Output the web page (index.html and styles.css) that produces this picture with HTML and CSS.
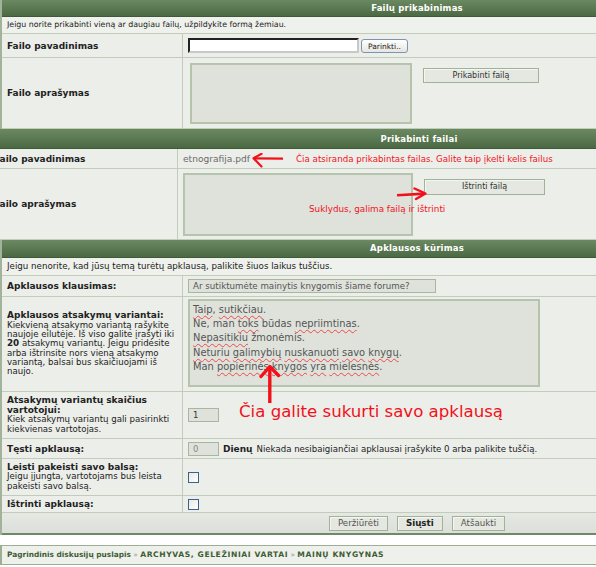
FILE: index.html
```html
<!DOCTYPE html>
<html lang="lt">
  <head>
    <meta charset="UTF-8" />
    <meta name="viewport" content="width=device-width, initial-scale=1.0" />
    <title>Failų prikabinimas</title>
    <link rel="stylesheet" href="styles.css">
  </head>
  <body>
    <div class="page">

      <!-- failų prikabinimas -->
      <div class="panel panel-attach">
        <div class="panel-head">Failų prikabinimas</div>
        <div class="panel-note">Jeigu norite prikabinti vieną ar daugiau failų, užpildykite formą žemiau.</div>
        <div class="row row-name">
          <div class="cell-label">Failo pavadinimas</div>
          <div class="cell-field">
            <span class="file-box"></span>
            <span class="btn-browse">Parinkti..</span>
          </div>
        </div>
        <div class="row row-desc">
          <div class="cell-label">Failo aprašymas</div>
          <div class="cell-field field-top">
            <div class="text-box box-attach"></div>
            <span class="btn btn-attach">Prikabinti failą</span>
          </div>
        </div>
      </div>

      <!-- jau prikabinti failai -->
      <div class="panel panel-files">
        <div class="panel-head">Prikabinti failai</div>
        <div class="row row-file">
          <div class="cell-label">Failo pavadinimas</div>
          <div class="cell-field">
            <span class="file-name">etnografija.pdf</span>
            <svg class="arrow-left" width="32" height="15" viewBox="0 0 32 15">
              <path d="M31 5.6 L2 5.4" stroke="#f2111b" stroke-width="2.2" fill="none"/>
              <path d="M9.5 0.8 L1.5 5.2 L9.5 13.5" stroke="#f2111b" stroke-width="2.2" fill="none" stroke-linecap="round" stroke-linejoin="round"/>
            </svg>
            <span class="hint">Čia atsiranda prikabintas failas. Galite taip įkelti kelis failus</span>
          </div>
        </div>
        <div class="row row-desc2">
          <div class="cell-label">Failo aprašymas</div>
          <div class="cell-field field-top">
            <div class="text-box box-files"></div>
            <span class="btn btn-delete">Ištrinti failą</span>
          </div>
          <svg class="arrow-right" width="32" height="14" viewBox="0 0 32 14">
            <path d="M1 8.2 L29 6.6" stroke="#f2111b" stroke-width="2.6" fill="none"/>
            <path d="M18.5 1.5 L29.5 6.5 L20 12" stroke="#f2111b" stroke-width="2.4" fill="none" stroke-linecap="round" stroke-linejoin="round"/>
          </svg>
          <span class="hint hint-delete">Suklydus, galima failą ir ištrinti</span>
        </div>
      </div>

      <!-- apklausos kūrimas -->
      <div class="panel panel-poll">
        <div class="panel-head">Apklausos kūrimas</div>
        <div class="panel-note">Jeigu nenorite, kad jūsų temą turėtų apklausą, palikite šiuos laikus tuščius.</div>
        <div class="row row-question">
          <div class="cell-label">Apklausos klausimas:</div>
          <div class="cell-field">
            <span class="field-box field-question">Ar sutiktumėte mainytis knygomis šiame forume?</span>
          </div>
        </div>
        <div class="row row-options">
          <div class="cell-label">
            <span class="label-title">Apklausos atsakymų variantai:</span>
            <span class="label-desc">Kiekvieną atsakymo variantą rašykite<br>naujoje eilutėje. Iš viso galite įrašyti iki<br><b>20</b> atsakymų variantų. Jeigu pridėsite<br>arba ištrinsite nors vieną atsakymo<br>variantą, balsai bus skaičiuojami iš<br>naujo.</span>
          </div>
          <div class="cell-field field-top">
            <div class="text-box box-options">
              <div><u>Taip</u>, <u>sutikčiau</u>.</div>
              <div>Ne, man <u>toks</u> būdas <u>nepriimtinas</u>.</div>
              <div><u>Nepasitikiu</u> žmonėmis.</div>
              <div><u>Neturiu</u> <u>galimybių</u> <u>nuskanuoti</u> <u>savo</u> <u>knygų</u>.</div>
              <div>Man <u>popierinės</u> <u>knygos</u> <u>yra</u> <u>mielesnės</u>.</div>
            </div>
          </div>
        </div>
        <div class="row row-count">
          <div class="cell-label">
            <span class="label-title">Atsakymų variantų skaičius<br>vartotojui:</span>
            <span class="label-desc">Kiek atsakymų variantų gali pasirinkti<br>kiekvienas vartotojas.</span>
          </div>
          <div class="cell-field">
            <span class="field-box field-small">1</span>
          </div>
        </div>
        <div class="row row-days">
          <div class="cell-label">Tęsti apklausą:</div>
          <div class="cell-field">
            <span class="field-box field-small field-empty">0</span>
            <span class="days">Dienų</span>
            <span class="days-note">Niekada nesibaigiančiai apklausai įrašykite 0 arba palikite tuščią.</span>
          </div>
        </div>
        <div class="row row-change">
          <div class="cell-label">
            <span class="label-title">Leisti pakeisti savo balsą:</span>
            <span class="label-desc">Jeigu įjungta, vartotojams bus leista<br>pakeisti savo balsą.</span>
          </div>
          <div class="cell-field">
            <span class="check"></span>
          </div>
        </div>
        <div class="row row-remove">
          <div class="cell-label">Ištrinti apklausą:</div>
          <div class="cell-field">
            <span class="check"></span>
          </div>
        </div>
        <div class="panel-foot">
          <span class="btn btn-foot">Peržiūrėti</span>
          <span class="btn btn-foot btn-main">Siųsti</span>
          <span class="btn btn-foot">Atšaukti</span>
        </div>

        <svg class="arrow-up" width="24" height="40" viewBox="0 0 24 40">
          <path d="M11.8 39 L11.8 4" stroke="#f2111b" stroke-width="3.4" fill="none"/>
          <path d="M3 12.5 L11.8 2.5 L20.5 11.5" stroke="#f2111b" stroke-width="3.4" fill="none" stroke-linecap="round" stroke-linejoin="round"/>
        </svg>
        <span class="hint-big">Čia galite sukurti savo apklausą</span>
      </div>

      <div class="crumbs">
        <a href="#">Pagrindinis diskusijų puslapis</a> <span class="sep">»</span>
        <a href="#" class="up">ARCHYVAS, GELEŽINIAI VARTAI</a> <span class="sep">»</span>
        <a href="#" class="up">MAINŲ KNYGYNAS</a>
      </div>

    </div>
  </body>
</html>
```

FILE: styles.css
```css
body {
  margin: 0;
  padding: 0;
  background: #fff;
  color: #222;
  font-family: "DejaVu Sans", Verdana, sans-serif;
}

.page {
  width: 596px;
  height: 567px;
  overflow: hidden;
}

/* ---------- panels ---------- */

.panel {
  position: relative;
  width: 832px;
  background: #eceee9;
  border-left: 2px solid #a3b29a;
  box-sizing: border-box;
}

.panel-files {
  margin-left: -13px;
  width: 862px;
}

.panel-head {
  height: 16px;
  line-height: 16px;
  text-align: center;
  color: #fff;
  font-size: 8.5px;
  font-weight: bold;
  letter-spacing: 0.2px;
  background: linear-gradient(#6b8961, #4b6943);
  border-bottom: 1px solid #3f5a38;
}

.panel-files .panel-head {
  height: 19px;
  line-height: 21px;
}

.panel-poll .panel-head {
  height: 17px;
  line-height: 17px;
}

.panel-note {
  height: 17px;
  line-height: 16px;
  padding-left: 5px;
  font-size: 7.85px;
  background: #eff1ec;
  border-bottom: 1px solid #c3ccbb;
  box-sizing: border-box;
}

.panel-poll .panel-note {
  height: 18px;
  line-height: 17px;
  font-size: 8.7px;
}

/* ---------- rows ---------- */

.row {
  display: grid;
  grid-template-columns: 181px 1fr;
  border-bottom: 1px solid #c3ccbb;
  box-sizing: border-box;
}

.panel-files .row {
  grid-template-columns: 189px 1fr;
}

.cell-label {
  display: flex;
  flex-direction: column;
  justify-content: center;
  padding-left: 5px;
  font-size: 9px;
  font-weight: bold;
  border-right: 1px solid #c3ccbb;
}

.cell-field {
  display: flex;
  align-items: center;
  padding-left: 5px;
}

.field-top {
  align-items: flex-start;
}

.row-name { height: 24px; }
.row-desc { height: 71px; }
.row-file { height: 20px; }
.row-desc2 { height: 71px; position: relative; }
.row-question { height: 21px; }
.row-options { height: 95px; }
.row-count { height: 47px; }
.row-days { height: 20px; }
.row-change { height: 37px; }
.row-remove { height: 17px; }

.label-title {
  line-height: 9.5px;
}

.label-desc {
  font-weight: normal;
  font-size: 8.6px;
  line-height: 9.3px;
  color: #222;
}

.label-desc b {
  font-size: 8.8px;
}

/* ---------- form controls ---------- */

.file-box {
  width: 167px;
  height: 11px;
  background: #fff;
  border: 2px solid #c8c8c8;
  border-top-color: #222;
  border-left-color: #222;
}

.btn-browse {
  margin-left: 2px;
  width: 47px;
  height: 14px;
  line-height: 13px;
  text-align: center;
  font-size: 7.5px;
  color: #222;
  border: 1px solid #7d93b4;
  border-radius: 3px;
  background: linear-gradient(#fff, #e6e5df);
  box-sizing: border-box;
}

.text-box {
  background: #dee2db;
  border: 2px solid #b6c4ad;
  box-sizing: border-box;
}

.box-attach {
  width: 222px;
  height: 61px;
  margin-top: 5px;
  margin-left: 2px;
}

.box-files {
  width: 230px;
  height: 63px;
  margin-top: 4px;
}

.btn {
  text-align: center;
  font-size: 8px;
  color: #333;
  background: #e4e8e0;
  border: 1px solid #a2b298;
  box-shadow: inset 1px 1px 0 #f4f6f2;
  box-sizing: border-box;
}

.btn-attach {
  width: 116px;
  height: 15px;
  line-height: 13px;
  margin-top: 10px;
  margin-left: 11px;
}

.btn-delete {
  width: 121px;
  height: 16px;
  line-height: 14px;
  margin-top: 10px;
  margin-left: 11px;
}

.file-name {
  font-size: 9.1px;
  color: #6a6a6a;
}

.arrow-left {
  margin-left: 2px;
  margin-top: 3px;
}

.hint {
  margin-left: 12px;
  font-size: 8.7px;
  color: #f2111b;
}

.arrow-right {
  position: absolute;
  left: 407px;
  top: 18px;
}

.hint-delete {
  position: absolute;
  left: 320px;
  top: 35px;
  margin: 0;
  font-size: 8.8px;
  line-height: 10px;
}

.field-box {
  height: 14px;
  line-height: 12px;
  padding-left: 4px;
  font-size: 8.7px;
  color: #555;
  white-space: nowrap;
  overflow: hidden;
  background: #dee2db;
  border: 1px solid #a7b69e;
  box-sizing: border-box;
}

.field-question {
  width: 248px;
}

.field-small {
  width: 31px;
  font-size: 8.5px;
  color: #333;
}

.field-empty {
  color: #8a8a8a;
}

.box-options {
  width: 352px;
  height: 88px;
  margin-top: 2px;
  padding: 2px 0 0 3px;
  font-size: 9.9px;
  line-height: 14.2px;
  color: #555;
}

.box-options u {
  text-decoration: underline wavy #f0474d;
  text-decoration-thickness: 1px;
  text-underline-offset: 2px;
}

.days {
  margin-left: 4px;
  font-size: 9px;
  font-weight: bold;
  color: #222;
}

.days-note {
  margin-left: 4px;
  font-size: 8.6px;
}

.check {
  width: 11px;
  height: 11px;
  background: linear-gradient(135deg, #e8e8e3, #fff);
  border: 1px solid #3f5f8c;
  box-sizing: border-box;
}

.panel-foot {
  display: flex;
  justify-content: center;
  gap: 9px;
  height: 22px;
  padding-top: 3px;
  background: linear-gradient(#e6e8e3, #dcdfd9);
  border-bottom: 2px solid #71876a;
  box-sizing: border-box;
}

.btn-foot {
  height: 15px;
  line-height: 13px;
  padding: 0 8px;
  font-size: 8.7px;
  color: #555;
}

.btn-main {
  font-weight: bold;
  color: #222;
}

.arrow-up {
  position: absolute;
  left: 256px;
  top: 124px;
}

.hint-big {
  position: absolute;
  left: 237px;
  top: 162px;
  font-size: 16.6px;
  color: #f2111b;
  white-space: nowrap;
}

/* ---------- kelias ---------- */

.crumbs {
  width: 832px;
  height: 20px;
  margin-top: 10px;
  line-height: 18px;
  padding-left: 5px;
  font-size: 7.4px;
  background: #eef0eb;
  border: 1px solid #9dae93;
  border-left-width: 2px;
  box-sizing: border-box;
}

.crumbs a {
  color: #3e5c33;
  font-weight: bold;
  text-decoration: none;
}

.crumbs a.up {
  font-size: 7.6px;
  letter-spacing: 0.6px;
}

.crumbs .sep {
  color: #999;
}
```
